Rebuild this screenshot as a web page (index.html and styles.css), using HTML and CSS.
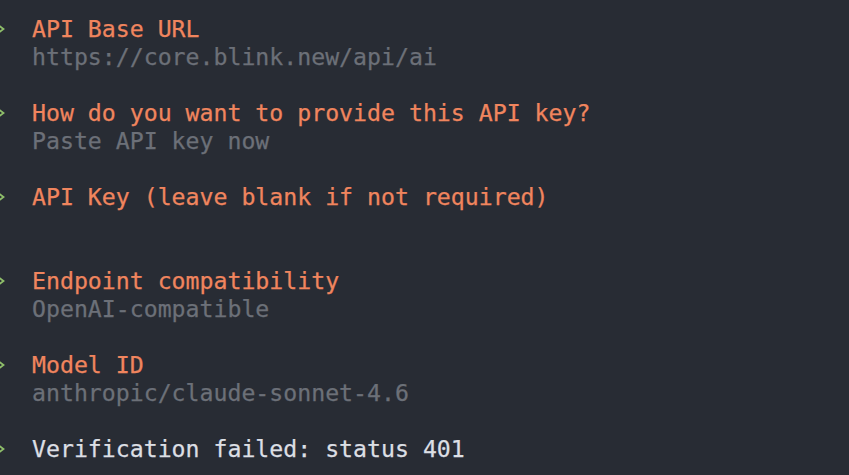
FILE: index.html
```html
<!DOCTYPE html>
<html>
<head>
<meta charset="utf-8">
<link rel="stylesheet" href="styles.css">
</head>
<body>
<div class="term">
  <div class="row"><span class="gutter"><svg class="chev" width="6" height="10" viewBox="0 0 6 10"><path d="M-1 1.5 L3.5 5 L-1 8.5" fill="none" stroke="#8fbf6a" stroke-width="1.8"/></svg></span><span class="title">API Base URL</span></div>
  <div class="row"><span class="gutter"></span><span class="value">https://core.blink.new/api/ai</span></div>
  <div class="row"></div>
  <div class="row"><span class="gutter"><svg class="chev" width="6" height="10" viewBox="0 0 6 10"><path d="M-1 1.5 L3.5 5 L-1 8.5" fill="none" stroke="#8fbf6a" stroke-width="1.8"/></svg></span><span class="title">How do you want to provide this API key?</span></div>
  <div class="row"><span class="gutter"></span><span class="value">Paste API key now</span></div>
  <div class="row"></div>
  <div class="row"><span class="gutter"><svg class="chev" width="6" height="10" viewBox="0 0 6 10"><path d="M-1 1.5 L3.5 5 L-1 8.5" fill="none" stroke="#8fbf6a" stroke-width="1.8"/></svg></span><span class="title">API Key (leave blank if not required)</span></div>
  <div class="row"></div>
  <div class="row"></div>
  <div class="row"><span class="gutter"><svg class="chev" width="6" height="10" viewBox="0 0 6 10"><path d="M-1 1.5 L3.5 5 L-1 8.5" fill="none" stroke="#8fbf6a" stroke-width="1.8"/></svg></span><span class="title">Endpoint compatibility</span></div>
  <div class="row"><span class="gutter"></span><span class="value">OpenAI-compatible</span></div>
  <div class="row"></div>
  <div class="row"><span class="gutter"><svg class="chev" width="6" height="10" viewBox="0 0 6 10"><path d="M-1 1.5 L3.5 5 L-1 8.5" fill="none" stroke="#8fbf6a" stroke-width="1.8"/></svg></span><span class="title">Model ID</span></div>
  <div class="row"><span class="gutter"></span><span class="value">anthropic/claude-sonnet-4.6</span></div>
  <div class="row"></div>
  <div class="row"><span class="gutter"><svg class="chev" width="6" height="10" viewBox="0 0 6 10"><path d="M-1 1.5 L3.5 5 L-1 8.5" fill="none" stroke="#8fbf6a" stroke-width="1.8"/></svg></span><span class="plain">Verification failed: status 401</span></div>
</div>
</body>
</html>
```

FILE: styles.css
```css
html, body {
  margin: 0;
  padding: 0;
  background: #282c34;
  height: 100%;
  overflow: hidden;
}
.term {
  padding-top: 15px;
  font-family: "DejaVu Sans Mono", "Liberation Mono", monospace;
  font-size: 23.2px;
}
.row {
  display: flex;
  align-items: center;
  height: 28px;
  line-height: 28px;
}
.row > span:last-child {
  white-space: pre;
  -webkit-text-stroke: 0.25px currentColor;
}
.gutter {
  width: 32px;
  flex: none;
  display: flex;
  align-items: center;
}
.chev {
  display: block;
  margin-top: 0px;
}
.title { color: #f0855e; }
.value { color: #6c7078; }
.plain { color: #dcdfe4; }
```
